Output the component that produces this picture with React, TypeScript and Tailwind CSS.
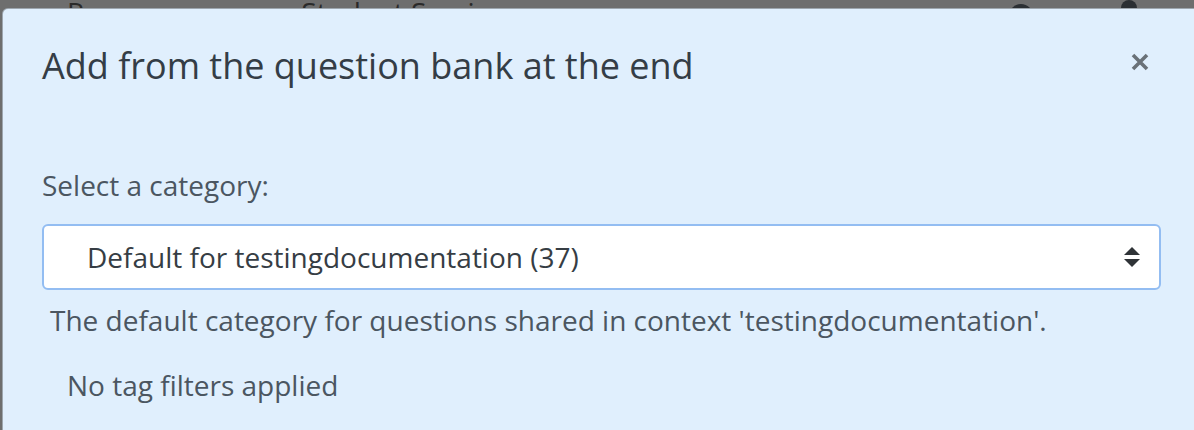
export default function App() {
  return (
    <div
      className="relative h-[430px] w-[1194px] overflow-hidden bg-[#6e6e6e]"
      style={{ fontFamily: '"Open Sans", sans-serif' }}
    >
      {/* page behind the backdrop, mostly covered by the modal */}
      <div className="flex h-[8px] items-start overflow-hidden text-[28px] leading-none text-[#2a2a2a]">
        <span className="ml-[67px] -mt-[2px]">Resources</span>
        <span className="ml-[100px] -mt-[2px]">Student Services</span>
        <span className="ml-auto mr-[88px] mt-[4px] h-[24px] w-[24px] shrink-0 rounded-full bg-[#2b2f33]" />
        <span className="mr-[57px] mt-0 h-[14px] w-[16px] shrink-0 rounded-t-full bg-[#2b2f33]" />
      </div>

      {/* modal */}
      <div className="ml-[2px] h-[430px] rounded-tl-[6px] border-l border-t border-[#3b3b3b]/40 bg-[#e0effd]">
        <div className="flex items-start justify-between pl-[39px] pr-[44px] pt-[35px]">
          <h2 className="text-[36px] leading-[44px] text-[#343d46]">
            Add from the question bank at the end
          </h2>
          <button type="button" className="mt-[8px] text-[#6a7178]">
            <svg width="20" height="20" viewBox="0 0 20 20">
              <path d="M3 3 L17 17 M17 3 L3 17" stroke="currentColor" strokeWidth="3.6" />
            </svg>
          </button>
        </div>

        <div className="pl-[39px] pr-[31px] pt-[79px]">
          <label className="block text-[28px] leading-[36px] text-[#4b5661]">Select a category:</label>
          <div className="mt-[21px] flex h-[66px] w-[1119px] items-center justify-between rounded-[6px] border-2 border-[#93bdf2] bg-white pl-[43px] pr-[19px]">
            <span className="text-[28px] leading-[36px] text-[#363d44]">Default for testingdocumentation (37)</span>
            <svg width="16" height="20" viewBox="0 0 16 20" className="text-[#2f3337]">
              <path d="M8 0 L16 8 L0 8 Z M8 20 L16 12 L0 12 Z" fill="currentColor" />
            </svg>
          </div>
          <p className="mt-[12px] pl-[8px] text-[28px] leading-[36px] text-[#4b5661]">
            The default category for questions shared in context 'testingdocumentation'.
          </p>
          <p className="mt-[29px] pl-[25px] text-[28px] leading-[36px] text-[#4b5661]">No tag filters applied</p>
        </div>
      </div>
    </div>
  );
}
